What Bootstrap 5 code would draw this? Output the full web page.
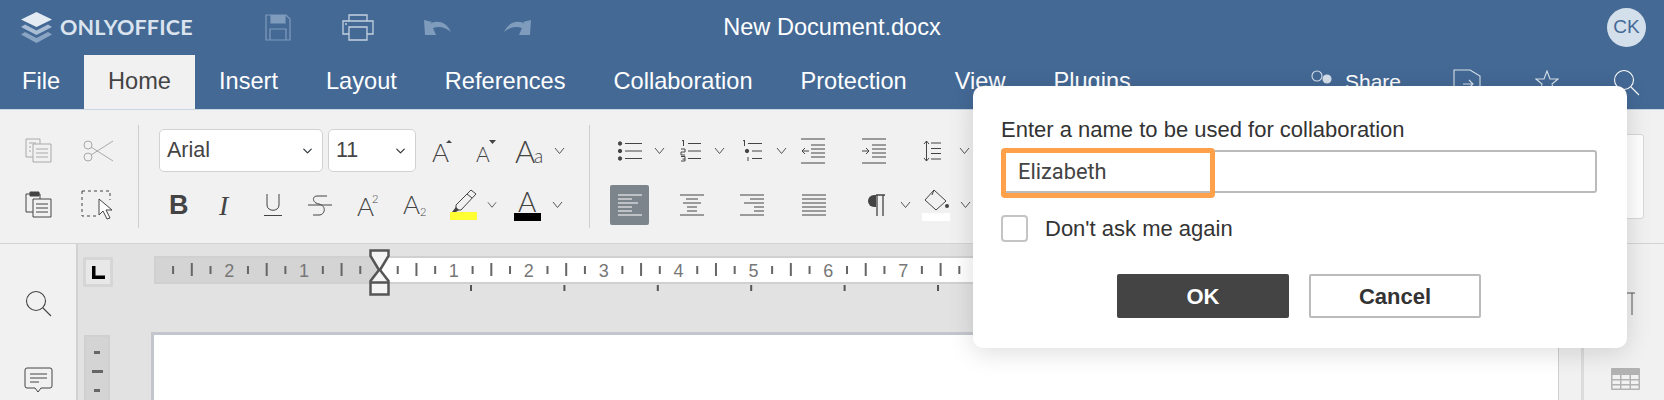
<!DOCTYPE html>
<html lang="en">
<head>
  <meta charset="UTF-8"/>
  <meta name="viewport" content="width=device-width, initial-scale=1.0"/>
  <title>New Document.docx</title>
  <link href="https://cdn.jsdelivr.net/npm/bootstrap@5.3.0/dist/css/bootstrap.min.css" rel="stylesheet"/>
  <style>
    body {
      height: 400px;
      overflow: hidden;
      background-color: #f1f1f1;
      color: #444;
      font-family: "Liberation Sans", Arial, sans-serif;
    }
    svg { display: block; flex: none; }
    .ln { fill: none; stroke: #444; stroke-width: 1; }
    .ln-soft { fill: none; stroke: #a9a9a9; stroke-width: 1; }
    .glyph { font-family: Lato, "Liberation Sans", sans-serif; font-weight: 300; fill: #444; }

    /* header */
    .app-head { background-color: #446995; border-bottom: 1px solid #c9d5e2; color: #fff; }
    .title-row { height: 55px; }
    .title-side { flex: 1 1 0; }
    .brand-name { font-family: Lato, "Open Sans", sans-serif; font-weight: 700; font-size: 21.5px; color: #dbe4ee; letter-spacing: .2px; }
    .doc-name { font-size: 23.6px; line-height: 1; }
    .avatar { width: 39px; height: 39px; background-color: #d3dfeb; color: #446995; font-size: 19px; margin-right: 18px; }
    .tab-row { height: 54px; margin-left: -2px; }
    .tab-row .nav-link { padding: 0 24px; height: 54px; line-height: 52px; color: #fff; font-size: 23.6px; border-radius: 0; }
    .tab-row .nav-link.active { background-color: #f1f1f1; color: #444; }
    .share-txt { font-size: 21px; }

    /* toolbar */
    .tool-bar { height: 134px; border-bottom: 1px solid #d4d4d4; padding-left: 25px; }
    .tool-sep { width: 1px; height: 103px; margin-top: 15px; background-color: #cfcfcf; }
    .tool-group { padding-top: 19px; gap: 11px; }
    .tool-row { height: 43px; }
    .font-pick { width: 164px; }
    .size-pick { width: 88px; }
    .tool-row .form-select { height: 43px; font-size: 21.5px; color: #444; padding: 0 0 0 7px; border: 1.5px solid #d2d2d2; border-radius: 5px; background-size: 13px 10px; background-position: right 8px center; }
    .align-on { width: 39px; height: 40px; background-color: #7d858c; border-radius: 2px; }
    .side-box { width: 60px; height: 85px; margin: 24px 20px 0 auto; background-color: #fff; border: 1px solid #d8d8d8; border-radius: 3px; }
    .g-5 { margin-left: 5px; } .g-8 { margin-left: 8px; } .g-9 { margin-left: 9px; } .g-10 { margin-left: 10px; }
    .g-11 { margin-left: 11px; } .g-12 { margin-left: 12px; } .g-13 { margin-left: 13px; } .g-14 { margin-left: 14px; }
    .g-15 { margin-left: 15px; } .g-16 { margin-left: 16px; } .g-17 { margin-left: 17px; } .g-18 { margin-left: 18px; }
    .g-20 { margin-left: 20px; } .g-21 { margin-left: 21px; } .g-23 { margin-left: 23px; } .g-24 { margin-left: 24px; }
    .g-25 { margin-left: 25px; } .g-26 { margin-left: 26px; } .g-29 { margin-left: 29px; } .g-31 { margin-left: 31px; }
    .g-32 { margin-left: 32px; } .g-36 { margin-left: 36px; } .g-37 { margin-left: 37px; } .g-38 { margin-left: 38px; }
    .g-41 { margin-left: 41px; } .g-50 { margin-left: 50px; } .g-51 { margin-left: 51px; } .g-52 { margin-left: 52px; }
    .g-53 { margin-left: 53px; } .g-54 { margin-left: 54px; } .g-72 { margin-left: 72px; }

    /* work area */
    .work-area { height: 156px; }
    .left-rail { width: 78px; border-right: 2px solid #d2d2d2; padding-top: 46px; gap: 50px; }
    .canvas-grid { display: grid; grid-template-columns: 73px 1fr; grid-template-rows: 88px 1fr; background-color: #e2e2e2; }
    .tab-stop { width: 30px; height: 30px; margin: 13px 0 0 5px; background-color: #e8e8e8; border: 3px solid #d6d6d6; }
    .ruler-wrap { padding: 3px 0 0 3px; overflow: hidden; }
    .v-ruler { width: 26px; margin: 3px 0 0 6px; background-color: #d4d4d4; border: 2px solid #d0d0d0; border-bottom: 0; padding-top: 14px; gap: 16px; }
    .v-tick { width: 6px; height: 3px; background-color: #666; }
    .v-tick-long { width: 11px; }
    .doc-page { background-color: #fff; border-top: 3px solid #c3c7cd; border-left: 3px solid #c3c7cd; border-right: 1px solid #cfcfcf; }
    .scroll-gutter { width: 25px; border-right: 3px solid #dcdcdc; }
    .right-rail { width: 80px; padding: 48px 0 0 27px; gap: 53px; }

    /* dialog */
    .name-dialog { position: absolute; left: 973px; top: 86px; width: 654px; height: 262px; background-color: #fff; border-radius: 10px; box-shadow: 0 4px 26px rgba(0, 0, 0, .14); padding: 31px 28px 0; color: #333; }
    .name-label { font-size: 22px; line-height: 26px; margin: 0 0 7px; }
    .name-box { position: relative; width: 596px; }
    .name-box .form-control { height: 43px; border: 2px solid #bbb; border-radius: 3px; padding: 0 15px; font-family: Roboto, sans-serif; font-size: 21.8px; color: #444; box-shadow: none; }
    .mark-box { position: absolute; left: 0; top: -2px; width: 214px; height: 50px; border: 5px solid #ffa04a; border-radius: 4px; pointer-events: none; }
    .ask-row { margin-top: 19px; gap: 17px; font-size: 22px; }
    .ask-row .form-check-input { width: 27px; height: 27px; margin: 0; border: 2px solid #c4c4c4; border-radius: 4px; }
    .btn-row { margin-top: 29px; margin-left: 116px; gap: 20px; }
    .btn-row .btn { width: 172px; height: 44px; padding: 0; font-size: 22px; font-weight: 700; border-radius: 2px; }
    .btn-ok { background-color: #444; border: 0; color: #fff; }
    .btn-row .btn-no { background-color: #fff; border: 2px solid #bbb; color: #333; }
  </style>
</head>
<body>

  <svg width="0" height="0" class="position-absolute">
    <symbol id="chev" viewBox="0 0 11 8"><polyline points="1,1 5.5,6.5 10,1" fill="none" stroke="#555" stroke-width="1"/></symbol>
    <symbol id="lupa" viewBox="0 0 27 27"><circle cx="11" cy="11" r="9.5" fill="none" stroke="currentColor" stroke-width="1.1"/><line x1="18" y1="18" x2="26" y2="26" stroke="currentColor" stroke-width="1.1"/></symbol>
  </svg>

  <!-- ========== HEADER ========== -->
  <div class="app-head">
    <div class="title-row d-flex align-items-center">
      <div class="title-side d-flex align-items-center">
        <svg class="g-21" width="31" height="31" viewBox="0 0 31 31">
          <path d="M15.5 0L31 7.500 15.500 15 0 7.500z" fill="#e4ebf3"/>
          <path d="M4 12.500L0 15 15.500 23 31 15 27 12.500 15.500 18.500z" fill="#a9bdd4"/>
          <path d="M4 20L0 22.500 15.500 31 31 22.500 27 20 15.500 26z" fill="#8aa5c3"/>
        </svg>
        <span class="brand-name g-8">ONLYOFFICE</span>
        <svg class="g-72" width="26" height="27" viewBox="0 0 26 27" fill="none" stroke="#7f9cbc" stroke-width="1.2">
          <path d="M1 1H21L25 5V26H1z"/><path d="M6 1V9H20V1" fill="#7f9cbc"/><path d="M5 26V15H21V26"/>
        </svg>
        <svg class="g-51" width="32" height="27" viewBox="0 0 32 27" fill="none" stroke="#c3d1e0" stroke-width="1.3">
          <path d="M7 7V1H25V7"/><path d="M7 20H1V7H31V20H25"/><path d="M7 13H25V26H7z"/><path d="M3 10H5"/>
        </svg>
        <svg class="g-50" width="27" height="17" viewBox="0 0 27 17" fill="#7f9cbc">
          <path d="M0 1L8 3 6 5C12 1 22 2 27 13 21 8 15 7 9 9L12 16H1z"/>
        </svg>
        <svg class="g-53" width="27" height="17" viewBox="0 0 27 17" fill="#7f9cbc">
          <path d="M27 1L19 3 21 5C15 1 5 2 0 13 6 8 12 7 18 9L15 16H26z"/>
        </svg>
      </div>
      <div class="doc-name">New Document.docx</div>
      <div class="title-side d-flex justify-content-end">
        <div class="avatar rounded-circle d-flex align-items-center justify-content-center">CK</div>
      </div>
    </div>
    <div class="tab-row d-flex">
      <ul class="nav">
        <li class="nav-item"><a class="nav-link" href="#">File</a></li>
        <li class="nav-item"><a class="nav-link active" href="#">Home</a></li>
        <li class="nav-item"><a class="nav-link" href="#">Insert</a></li>
        <li class="nav-item"><a class="nav-link" href="#">Layout</a></li>
        <li class="nav-item"><a class="nav-link" href="#">References</a></li>
        <li class="nav-item"><a class="nav-link" href="#">Collaboration</a></li>
        <li class="nav-item"><a class="nav-link" href="#">Protection</a></li>
        <li class="nav-item"><a class="nav-link" href="#">View</a></li>
        <li class="nav-item"><a class="nav-link" href="#">Plugins</a></li>
      </ul>
      <div class="d-flex align-items-center ms-auto pe-4">
        <svg width="22" height="24" viewBox="0 0 22 24" fill="none" stroke="#d8e2ec" stroke-width="1.1">
          <circle cx="7" cy="6" r="5"/><circle cx="17" cy="9" r="4" fill="#d8e2ec"/><path d="M1 24C1 17 13 17 13 24"/>
        </svg>
        <span class="share-txt g-13">Share</span>
        <svg class="g-52" width="28" height="26" viewBox="0 0 28 26" fill="none" stroke="#d8e2ec" stroke-width="1.1">
          <path d="M1 1H17L27 7V25H1z"/><path d="M10 15H20M16 11L20 15 16 19"/>
        </svg>
        <svg class="g-54" width="24" height="24" viewBox="0 0 24 24" fill="none" stroke="#d8e2ec" stroke-width="1.1">
          <path d="M12 1L15 9H23L17 14 19 23 12 18 5 23 7 14 1 9H9z"/>
        </svg>
        <svg class="g-54 text-white" width="27" height="27"><use href="#lupa"/></svg>
      </div>
    </div>
  </div>

  <!-- ========== TOOLBAR ========== -->
  <div class="tool-bar d-flex">
    <div class="tool-group d-flex flex-column">
      <div class="tool-row d-flex align-items-center">
        <svg width="27" height="25" viewBox="0 0 27 25" class="ln-soft">
          <path d="M8 19H1V1H15V6"/><path d="M8 6H26V24H8z"/><path d="M11 11H23M11 15H23M11 19H23M4 5H11M4 9H6M4 13H6"/>
        </svg>
        <svg class="g-31" width="31" height="24" viewBox="0 0 31 24" fill="none" stroke="#a9a9a9">
          <circle cx="5" cy="6" r="4"/><circle cx="5" cy="18" r="4"/><path d="M8 8L30 22M8 16L30 2"/>
        </svg>
      </div>
      <div class="tool-row d-flex align-items-center">
        <svg width="27" height="27" viewBox="0 0 27 27" class="ln">
          <path d="M8 21H1V3H15V8"/><path d="M5 1H14V5H5z" fill="#444"/><path d="M8 8H26V26H8z"/><path d="M11 13H23M11 17H23M11 21H23"/>
        </svg>
        <svg class="g-29" width="33" height="30" viewBox="0 0 33 30" fill="none" stroke="#444">
          <path d="M1 1H29V10M1 1V26H17" stroke-dasharray="3 3"/><path d="M18 9V25L22 21 26 29 29 28 25 20H31z" fill="#fff"/>
        </svg>
      </div>
    </div>
    <div class="tool-sep g-24"></div>

    <div class="tool-group d-flex flex-column g-20">
      <div class="tool-row d-flex align-items-center">
        <select class="form-select font-pick" aria-label="Font"><option>Arial</option></select>
        <select class="form-select size-pick g-5" aria-label="Size"><option>11</option></select>
        <svg class="g-16" width="21" height="40" viewBox="0 -8 21 40"><text class="glyph" x="0" y="23" font-size="26">A</text><path d="M14 4L17 1 20 4z" fill="#444"/></svg>
        <svg class="g-23" width="21" height="40" viewBox="0 -8 21 40"><text class="glyph" x="0" y="23" font-size="21">A</text><path d="M13 1H20L16.500 5z" fill="#444"/></svg>
        <svg class="g-18" width="30" height="40" viewBox="0 -7 30 40"><text class="glyph" x="0" y="25" font-size="31">A</text><text class="glyph" x="19" y="25" font-size="19">a</text></svg>
        <svg class="g-9" width="11" height="8"><use href="#chev"/></svg>
      </div>
      <div class="tool-row d-flex align-items-center">
        <svg class="g-10" width="20" height="42" viewBox="0 -10 20 42"><text x="0" y="20" font-size="27" font-weight="700" font-family="Liberation Sans, sans-serif" fill="#444">B</text></svg>
        <svg class="g-29" width="14" height="42" viewBox="0 -10 14 42"><text x="1" y="20.500" font-size="28" font-style="italic" font-family="Liberation Serif, serif" fill="#444">I</text></svg>
        <svg class="g-32" width="18" height="24" viewBox="0 0 18 24" fill="none" stroke="#444"><path d="M3 1V12C3 19 15 19 15 12V1"/><path d="M0 22.500H18"/></svg>
        <svg class="g-26" width="24" height="22" viewBox="0 0 24 22" fill="none" stroke="#444"><path d="M19 2H9C4 2 4 9 11 10 19 12 17 21 11 21H5"/><path d="M0 11H24"/></svg>
        <svg class="g-25" width="22" height="40" viewBox="0 -8 22 40"><text class="glyph" x="0" y="23" font-size="26">A</text><text class="glyph" x="15" y="10" font-size="11">2</text></svg>
        <svg class="g-24" width="24" height="40" viewBox="0 -8 24 40"><text class="glyph" x="0" y="21" font-size="26">A</text><text class="glyph" x="17" y="23" font-size="11">2</text></svg>
        <svg class="g-23" width="27" height="32" viewBox="0 0 27 32">
          <path d="M21 1L26 5 11 21H6V16z" fill="none" stroke="#444"/><path d="M17 5L22 9" stroke="#444"/><path d="M2 23L6 18 9 21 6 23z" fill="#444"/>
          <rect x="0" y="23" width="27" height="8" fill="#ffff33"/>
        </svg>
        <svg class="g-10" width="10" height="8"><use href="#chev"/></svg>
        <svg class="g-17" width="27" height="42" viewBox="0 -5 27 42">
          <text class="glyph" x="4" y="23" font-size="28">A</text><rect x="0" y="24" width="27" height="8" fill="#000"/>
        </svg>
        <svg class="g-11" width="11" height="8"><use href="#chev"/></svg>
      </div>
    </div>
    <div class="tool-sep g-24"></div>

    <div class="tool-group d-flex flex-column g-20">
      <div class="tool-row d-flex align-items-center">
        <svg class="g-8" width="24" height="22" viewBox="0 0 24 22" fill="none" stroke="#444"><path d="M7 3.500H24M7 11H24M7 18.500H24"/><circle cx="2" cy="3.500" r="1.700" fill="#444"/><circle cx="2" cy="11" r="1.700" fill="#444"/><circle cx="2" cy="18.500" r="1.700" fill="#444"/></svg>
        <svg class="g-12" width="11" height="8"><use href="#chev"/></svg>
        <svg class="g-15" width="21" height="22" viewBox="0 0 21 22" fill="none" stroke="#444"><path d="M8 3.500H21M8 11H21M8 18.500H21M2 1L3.500 0V6M1 9H5V12H1V15H5M1 16.500H5V21H1M2.500 19H5"/></svg>
        <svg class="g-13" width="11" height="8"><use href="#chev"/></svg>
        <svg class="g-16" width="21" height="22" viewBox="0 0 21 22" fill="none" stroke="#444"><path d="M7 3.500H21M11 11H21M11 18.500H21M2 1L3.500 0V6M7 17V21"/><circle cx="6" cy="11" r="1.700" fill="#444"/></svg>
        <svg class="g-14" width="11" height="8"><use href="#chev"/></svg>
        <svg class="g-14" width="24" height="26" viewBox="0 0 24 26" fill="none" stroke="#444"><path d="M0 1H24M0 25H24M10 7H24M10 11H24M10 15H24M10 19H24M1 13H8M4 10L1 13 4 16"/></svg>
        <svg class="g-37" width="24" height="26" viewBox="0 0 24 26" fill="none" stroke="#444"><path d="M0 1H24M0 25H24M10 7H24M10 11H24M10 15H24M10 19H24M0 13H7M4 10L7 13 4 16"/></svg>
        <svg class="g-37" width="18" height="20" viewBox="0 0 18 20" fill="none" stroke="#444"><path d="M3.500 0V20M1 3L3.500 0 6 3M1 17L3.500 20 6 17M8 2H18M8 7.500H18M8 12.500H18M8 18H18"/></svg>
        <svg class="g-18" width="11" height="8"><use href="#chev"/></svg>
      </div>
      <div class="tool-row d-flex align-items-center">
        <div class="align-on d-flex align-items-center justify-content-center">
          <svg width="24" height="22" viewBox="0 0 24 22" fill="none" stroke="#fff"><path d="M0 1H24M0 5H14M0 9H20M0 13H14M0 17H14M0 21H24"/></svg>
        </div>
        <svg class="g-31" width="24" height="22" viewBox="0 0 24 22" fill="none" stroke="#444"><path d="M0 1H24M6 5H18M3 9H21M7 13H17M7 17H17M0 21H24"/></svg>
        <svg class="g-36" width="24" height="22" viewBox="0 0 24 22" fill="none" stroke="#444"><path d="M0 1H24M10 5H24M4 9H24M14 13H24M14 17H24M0 21H24"/></svg>
        <svg class="g-38" width="24" height="22" viewBox="0 0 24 22" fill="none" stroke="#444"><path d="M0 1H24M0 5H24M0 9H24M0 13H24M0 17H24M0 21H24"/></svg>
        <svg class="g-41" width="18" height="22" viewBox="0 0 18 22"><path d="M9 1H7A6 6 0 0 0 7 13H9z" fill="#444"/><path d="M9 1H18M10 1V22M16 1V22" fill="none" stroke="#444" stroke-width="1.300"/></svg>
        <svg class="g-15" width="11" height="8"><use href="#chev"/></svg>
        <svg class="g-11" width="28" height="32" viewBox="0 0 28 32">
          <path d="M12 1L24 12 14 21 3 11z" fill="none" stroke="#444"/><path d="M12 1L10 6" stroke="#444"/><circle cx="25" cy="17" r="2" fill="#444"/>
          <rect x="0" y="24" width="28" height="8" fill="#fff"/>
        </svg>
        <svg class="g-10" width="11" height="8"><use href="#chev"/></svg>
      </div>
    </div>
    <div class="side-box"></div>
  </div>

  <!-- ========== WORK AREA ========== -->
  <div class="work-area d-flex">
    <div class="left-rail d-flex flex-column align-items-center">
      <svg width="27" height="27"><use href="#lupa"/></svg>
      <svg width="29" height="26" viewBox="0 0 29 26" fill="none" stroke="#444">
        <path d="M3 1H26Q28 1 28 3V19Q28 21 26 21H17L14 25 11 21H3Q1 21 1 19V3Q1 1 3 1z"/><path d="M6 7H23M6 11H23M6 15H15"/>
      </svg>
    </div>
    <div class="canvas-grid flex-grow-1">
      <div class="tab-stop d-flex align-items-center justify-content-center">
        <svg width="13" height="13" viewBox="0 0 13 13"><path d="M0 0H3.500V9.500H13V13H0z" fill="#000"/></svg>
      </div>
      <div class="ruler-wrap">
        <svg id="ruler" width="1402" height="50" viewBox="0 0 1402 50"></svg>
      </div>
      <div class="v-ruler d-flex flex-column align-items-center">
        <div class="v-tick"></div>
        <div class="v-tick v-tick-long"></div>
        <div class="v-tick"></div>
      </div>
      <div class="doc-page"></div>
    </div>
    <div class="scroll-gutter"></div>
    <div class="right-rail d-flex flex-column">
      <svg width="24" height="23" viewBox="0 0 24 23"><path d="M13 1H24M15 1V23M21 1V23" fill="none" stroke="#555"/></svg>
      <svg width="29" height="22" viewBox="0 0 29 22"><rect width="29" height="22" rx="1" fill="#b2b2b2"/><path d="M1.500 7H9V11H1.500zM10.500 7H18.500V11H10.500zM20 7H27.500V11H20zM1.500 12.500H9V16H1.500zM10.500 12.500H18.500V16H10.500zM20 12.500H27.500V16H20zM1.500 17.500H9V20.500H1.500zM10.500 17.500H18.500V20.500H10.500zM20 17.500H27.500V20.500H20z" fill="#f1f1f1"/></svg>
    </div>
  </div>

  <!-- ========== NAME DIALOG ========== -->
  <div class="name-dialog">
    <p class="name-label">Enter a name to be used for collaboration</p>
    <div class="name-box">
      <input type="text" class="form-control" value="Elizabeth" aria-label="Name"/>
      <div class="mark-box"></div>
    </div>
    <div class="ask-row d-flex align-items-center">
      <input class="form-check-input" type="checkbox" id="askAgain"/>
      <label for="askAgain">Don't ask me again</label>
    </div>
    <div class="btn-row d-flex">
      <button type="button" class="btn btn-ok">OK</button>
      <button type="button" class="btn btn-no">Cancel</button>
    </div>
  </div>

<script>
  // ruler ticks: origin at the indent marker, 18.75px per quarter inch
  const ns = "http://www.w3.org/2000/svg";
  const ruler = document.getElementById("ruler");
  const originX = 225;

  function add(tag, attrs, text) {
    const el = document.createElementNS(ns, tag);
    for (const k in attrs) el.setAttribute(k, attrs[k]);
    if (text) el.textContent = text;
    ruler.appendChild(el);
  }

  add("rect", { x: 0, y: 9, width: 1402, height: 28, fill: "#d0d0d0" });
  add("rect", { x: 2, y: 11, width: originX, height: 24, fill: "#d4d4d4" });
  add("rect", { x: originX, y: 11, width: 1402, height: 24, fill: "#fff" });

  for (let i = -11; i <= 62; i++) {
    const x = originX + i * 18.72;
    if (i === 0) continue;
    if (i % 4 === 0) {
      add("text", { x: x, y: 29.5, "font-size": 18, "text-anchor": "middle", fill: "#777", "font-family": "Liberation Sans, sans-serif" }, String(Math.abs(i / 4)));
    } else if (i % 2 === 0) {
      add("rect", { x: x - 1, y: 16, width: 2, height: 13, fill: "#666" });
    } else {
      add("rect", { x: x - 1, y: 19, width: 2, height: 8, fill: "#666" });
    }
  }
  for (let k = 0; k < 12; k++) {
    add("rect", { x: 317 + k * 93.4 - 1, y: 38, width: 2, height: 6, fill: "#555" });
  }

  // hourglass indent marker
  add("path", { d: "M216.500 3.500H234.500V9L226 23L234.500 34V47.500H216.500V34L225 23L216.500 9Z", fill: "#f4f4f4", stroke: "#555", "stroke-width": 2.5 });
  add("path", { d: "M216.500 35.500H234.500", stroke: "#555", "stroke-width": 2.5 });
</script>

</body>
</html>
